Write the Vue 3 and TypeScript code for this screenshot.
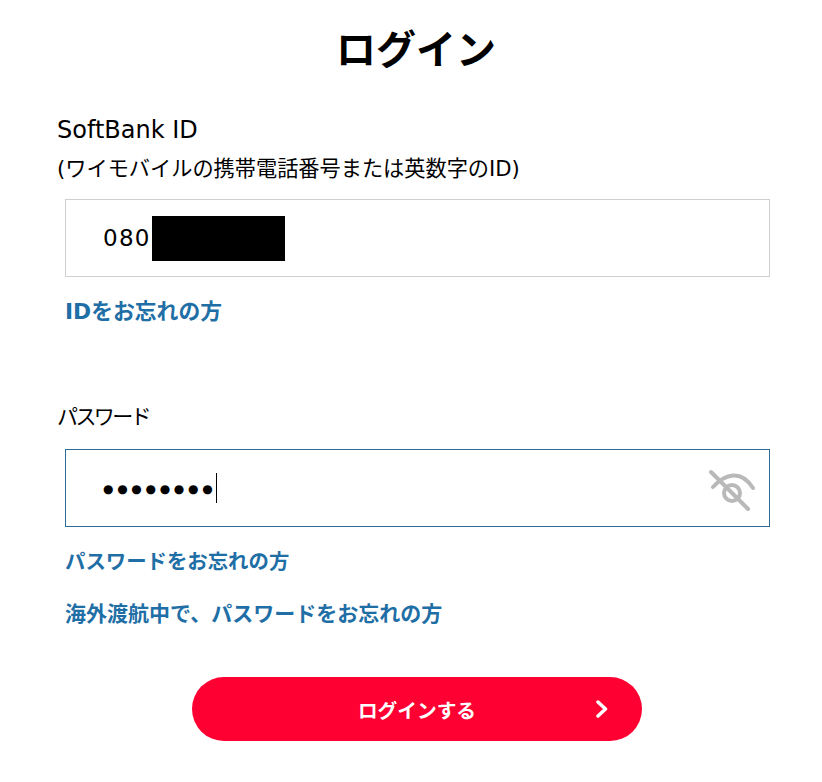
<script setup lang="ts">
const dots = '●'.repeat(8)
</script>

<template>
  <main class="login">
    <h1 class="title">ログイン</h1>

    <section class="field id-field">
      <label class="label">SoftBank ID<br /><span class="sub">(ワイモバイルの携帯電話番号または英数字のID)</span></label>
      <div class="input">
        <span class="value">080</span>
        <span class="redact" />
      </div>
      <a class="link first id-link" href="#">IDをお忘れの方</a>
    </section>

    <section class="field pw-field">
      <label class="label pw-label">パスワード</label>
      <div class="input focus">
        <span class="dots">{{ dots }}</span>
        <span class="caret" />
        <svg class="eye" viewBox="0 0 46 44" width="46" height="44" fill="none" stroke="#b9b9b9" stroke-linecap="round" stroke-width="4">
          <path d="M4 18 C16 5 32 0 44 19" />
          <circle cx="23" cy="24" r="8" />
          <path d="M2 3 L39 40" />
        </svg>
      </div>
      <a class="link first pw-link" href="#">パスワードをお忘れの方</a>
      <a class="link second" href="#">海外渡航中で、パスワードをお忘れの方</a>
    </section>

    <button class="submit" type="button">
      <span>ログインする</span>
      <svg class="chevron" viewBox="0 0 12 18" width="12" height="18" fill="none" stroke="#fff" stroke-width="3.5" stroke-linecap="round" stroke-linejoin="round">
        <path d="M2 2 L9.5 9 L2 16" />
      </svg>
    </button>
  </main>
</template>

<style scoped>
.login {
  width: 822px;
  height: 782px;
  box-sizing: border-box;
  padding-top: 14px;
  overflow: hidden;
  background: #fff;
  color: #000;
  font-family: "DejaVu Sans", "Noto Sans CJK JP", sans-serif;
  display: flex;
  flex-direction: column;
}

.title {
  margin: 0;
  padding-left: 10px;
  text-align: center;
  font-family: "Noto Sans CJK JP", sans-serif;
  font-size: 40px;
  font-weight: 700;
  line-height: 66px;
}

.field {
  display: flex;
  flex-direction: column;
  padding-left: 65px;
}

.id-field {
  margin-top: 31px;
}

.pw-field {
  margin-top: 70px;
}

.label {
  margin-left: -8px;
  font-size: 24px;
  line-height: 38px;
}

.sub {
  font-size: 21.2px;
}

.pw-label {
  font-family: "Noto Sans CJK JP", sans-serif;
  font-size: 21px;
  letter-spacing: -2.6px;
  line-height: 36px;
}

.input {
  width: 705px;
  height: 78px;
  box-sizing: border-box;
  margin-top: 11px;
  padding-left: 37px;
  border: 1px solid #cfcfcf;
  display: flex;
  align-items: center;
  position: relative;
}

.input.focus {
  margin-top: 16px;
  border-color: #2f6a94;
}

.value {
  font-size: 23px;
  letter-spacing: 1.3px;
}

.redact {
  width: 133px;
  height: 45px;
  margin-left: 1px;
  background: #000;
}

.dots {
  padding-top: 2px;
  font-family: "DejaVu Sans", sans-serif;
  font-size: 12px;
  letter-spacing: 3.7px;
}

.caret {
  width: 1px;
  height: 30px;
  background: #000;
}

.eye {
  position: absolute;
  right: 14px;
  top: 19px;
}

.link {
  align-self: flex-start;
  color: #1f6fa6;
  font-size: 21px;
  font-family: "Noto Sans CJK JP", sans-serif;
  font-weight: 700;
  line-height: 30px;
  text-decoration: none;
}

.link.pw-link {
  font-size: 20.4px;
}

.link.first {
  margin-top: 18px;
}

.link.id-link {
  margin-top: 20px;
  font-family: "DejaVu Sans", "Noto Sans CJK JP", sans-serif;
  font-size: 21.8px;
}

.link.second {
  margin-top: 22px;
}

.submit {
  align-self: flex-start;
  width: 450px;
  height: 64px;
  margin: 50px 0 0 192px;
  padding: 0;
  border: 0;
  border-radius: 32px;
  background: #ff0033;
  color: #fff;
  font-family: "Noto Sans CJK JP", sans-serif;
  font-size: 19.7px;
  font-weight: 700;
  display: flex;
  align-items: center;
  justify-content: center;
  position: relative;
}

.chevron {
  position: absolute;
  right: 34px;
  top: 23px;
}
</style>
